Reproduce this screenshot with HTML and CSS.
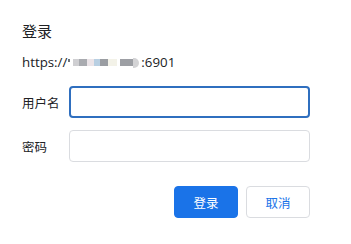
FILE: index.html
```html
<!DOCTYPE html>
<html lang="zh-CN">
<head>
<meta charset="utf-8">
<link rel="stylesheet" href="styles.css">
</head>
<body>
<div class="dialog">
  <div class="title">登录</div>
  <div class="origin"><span>https://</span><span class="blur"><i class="b0"></i><i class="b1"></i><i class="b2"></i><i class="b3"></i><i class="b4"></i><i class="b5"></i><i class="b6"></i><i class="b7"></i><i class="b8"></i></span><span>:6901</span></div>
  <div class="form">
    <label class="row">
      <span class="label">用户名</span>
      <input class="field focused" type="text">
    </label>
    <label class="row">
      <span class="label">密码</span>
      <input class="field" type="password">
    </label>
  </div>
  <div class="actions">
    <button class="btn primary">登录</button>
    <button class="btn secondary">取消</button>
  </div>
</div>
</body>
</html>
```

FILE: styles.css
```css
html, body {
  margin: 0;
  background: #ffffff;
}
body {
  font-family: "Noto Sans CJK SC", "Noto Sans", "Liberation Sans", sans-serif;
  color: #202124;
}
.dialog {
  padding: 21px 41px 0 22px;
}
.title {
  font-size: 15px;
  line-height: 20px;
  height: 20px;
}
.origin {
  margin-top: 12px;
  font-family: "Open Sans", "Noto Sans", sans-serif;
  font-size: 13.3px;
  line-height: 18px;
  display: flex;
  align-items: center;
  color: #202124;
}
.blur {
  display: flex;
  align-items: center;
  height: 10px;
  width: 73px;
  margin-left: 1px;
}
.blur i {
  display: block;
  height: 7px;
  margin-top: 1px;
}
.blur .b0 { width: 2px; height: 3px; background: #6f7176; margin-top: -4px; }
.blur .b1 { width: 6px; background: #cfcfd2; margin-left: 3px; }
.blur .b2 { width: 8px; background: #a9abb0; }
.blur .b3 { width: 7px; background: #ebe4e8; }
.blur .b4 { width: 6px; background: #b8cfe2; }
.blur .b5 { width: 8px; background: #9a9da2; }
.blur .b6 { width: 9px; background: #f3f2e8; }
.blur .b7 { width: 13px; background: #9d9fa4; margin-left: 3px; }
.blur .b8 { width: 6px; background: #d3d3d5; height: 10px; border-radius: 0 5px 5px 0; }
.form {
  margin-top: 15px;
  display: flex;
  flex-direction: column;
  gap: 12px;
}
.row {
  display: flex;
  align-items: center;
}
.label {
  width: 47px;
  flex: none;
  font-size: 12.5px;
  color: #202124;
}
.field {
  flex: 1;
  box-sizing: border-box;
  height: 32px;
  margin: 0;
  border: 1px solid #dadce0;
  border-radius: 4px;
  background: #fff;
  outline: none;
  padding: 0 8px;
  font: inherit;
}
.field.focused {
  border: 2px solid #2f6fbf;
}
.actions {
  margin-top: 24px;
  display: flex;
  justify-content: flex-end;
  gap: 8px;
}
.btn {
  width: 64px;
  height: 32px;
  box-sizing: border-box;
  border-radius: 4px;
  font-family: "Noto Sans CJK SC", sans-serif;
  font-size: 12.5px;
  padding: 0;
  margin: 0;
}
.primary {
  background: #1a73e8;
  border: 1px solid #1a73e8;
  color: #ffffff;
}
.secondary {
  background: #ffffff;
  border: 1px solid #dadce0;
  color: #1a73e8;
}
```
